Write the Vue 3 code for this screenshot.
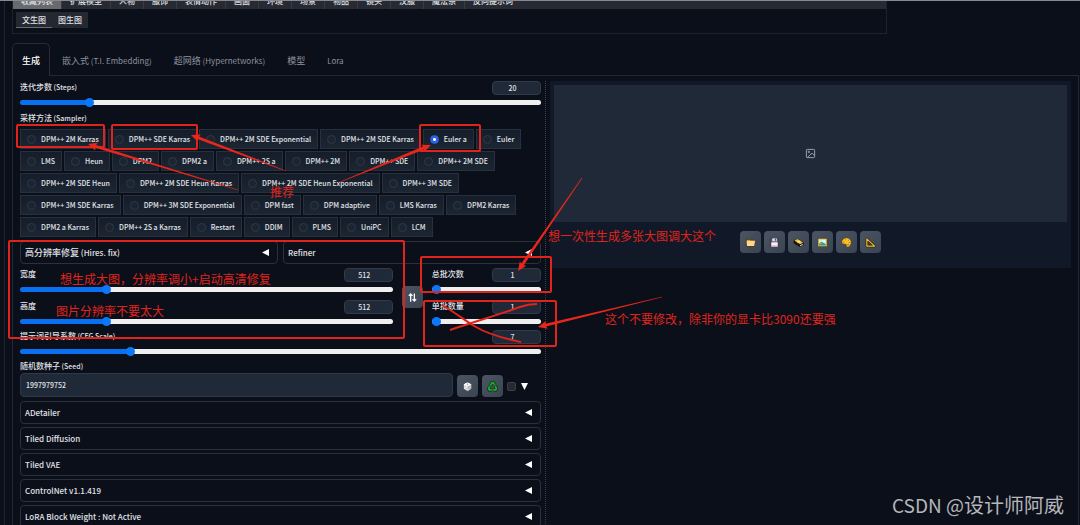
<script setup>
import { ref, reactive, h } from 'vue'

const categories = ['收藏列表', '扩展模型', '人物', '服饰', '表情动作', '画面', '环境', '场景', '物品', '镜头', '汉服', '魔法系', '反向提示词']
const modes = ['文生图', '图生图']
const tabs = ['生成', '嵌入式 (T.I. Embedding)', '超网络 (Hypernetworks)', '模型', 'Lora']

const samplerRows = [
  ['DPM++ 2M Karras', 'DPM++ SDE Karras', 'DPM++ 2M SDE Exponential', 'DPM++ 2M SDE Karras', 'Euler a', 'Euler'],
  ['LMS', 'Heun', 'DPM2', 'DPM2 a', 'DPM++ 2S a', 'DPM++ 2M', 'DPM++ SDE', 'DPM++ 2M SDE'],
  ['DPM++ 2M SDE Heun', 'DPM++ 2M SDE Heun Karras', 'DPM++ 2M SDE Heun Exponential', 'DPM++ 3M SDE'],
  ['DPM++ 3M SDE Karras', 'DPM++ 3M SDE Exponential', 'DPM fast', 'DPM adaptive', 'LMS Karras', 'DPM2 Karras'],
  ['DPM2 a Karras', 'DPM++ 2S a Karras', 'Restart', 'DDIM', 'PLMS', 'UniPC', 'LCM'],
]
const sampler = ref('Euler a')

const s = reactive({
  steps: { id: 'steps', label: '迭代步数 (Steps)', value: 20, min: 1, max: 150 },
  width: { id: 'width', label: '宽度', value: 512, min: 64, max: 2048 },
  height: { id: 'height', label: '高度', value: 512, min: 64, max: 2048 },
  count: { id: 'count', label: '总批次数', value: 1, min: 1, max: 100 },
  size: { id: 'size', label: '单批数量', value: 1, min: 1, max: 8 },
  cfg: { id: 'cfg', label: '提示词引导系数 (CFG Scale)', value: 7, min: 1, max: 30 },
})
const fill = (f) => ({ '--fill': ((f.value - f.min) / (f.max - f.min)) * 100 + '%' })
const groups = [[s.steps], [s.width, s.height], [s.count, s.size], [s.cfg]]

const seed = ref('1997979752')
const scripts = ['ADetailer', 'Tiled Diffusion', 'Tiled VAE', 'ControlNet v1.1.419', 'LoRA Block Weight : Not Active']
const tools = ['folder', 'save', 'archive', 'picture', 'palette', 'ruler']

// Latin runs are set one size below the Chinese characters beside them.
const Mixed = ({ text }) =>
  h('span', text.match(/[ -~]+|[^ -~]+/g).map((run) => (/^[ -~]/.test(run) ? h('span', { class: 'latin' }, run) : run)))
Mixed.props = ['text']

const boxes = [
  [17, 125, 87, 22], [112, 125, 85, 24], [420, 125, 60, 26],
  [9, 241, 395, 97], [421, 257, 130, 35], [424, 301, 132, 45],
]
const arrows = [
  [238, 190, 88, 144], [286, 171, 191, 135], [340, 182, 431, 145],
  [582, 178, 518, 271], [662, 297, 538, 327],
].map(([x1, y1, x2, y2]) => {
  const d = Math.hypot(x2 - x1, y2 - y1)
  const ux = (x2 - x1) / d
  const uy = (y2 - y1) / d
  const at = (back, side) => `${x2 - ux * back - uy * side},${y2 - uy * back + ux * side}`
  return [at(d, 0.3), at(8, 1.5), at(9, 4), at(0, 0), at(9, -4), at(8, -1.5), at(d, -0.3)].join(' ')
})
const notes = [
  [270, 197, '推荐'],
  [60, 284, '想生成大图，分辨率调小+启动高清修复'],
  [56, 316, '图片分辨率不要太大'],
  [548, 241, '想一次性生成多张大图调大这个'],
  [605, 324, '这个不要修改，除非你的显卡比3090还要强'],
]
</script>

<template>
  <div class="page">
    <div class="shell">
      <header class="prompt-box">
        <nav class="categories">
          <button v-for="(c, i) in categories" :key="c" :class="{ active: i === 0 }">{{ c }}</button>
        </nav>
        <div class="modes">
          <button v-for="(m, i) in modes" :key="m" :class="{ active: i === 0 }">{{ m }}</button>
        </div>
      </header>

      <nav class="tabs">
        <button v-for="(t, i) in tabs" :key="t" :class="{ active: i === 0 }"><Mixed :text="t" /></button>
      </nav>

      <main class="panel">
        <section class="settings">
          <div v-for="f in groups[0]" :key="f.id" class="field">
            <div class="field-head">
              <label :for="f.id"><Mixed :text="f.label" /></label>
              <input :id="f.id" v-model.number="f.value" class="number" type="number" />
            </div>
            <input v-model.number="f.value" type="range" :min="f.min" :max="f.max" :style="fill(f)" :aria-label="f.label" />
          </div>

          <fieldset class="samplers">
            <legend><Mixed text="采样方法 (Sampler)" /></legend>
            <div v-for="(row, i) in samplerRows" :key="i" class="sampler-row">
              <label v-for="name in row" :key="name">
                <input v-model="sampler" type="radio" name="sampler" :value="name" />{{ name }}
              </label>
            </div>
          </fieldset>

          <div class="pair">
            <button class="accordion"><Mixed text="高分辨率修复 (Hires. fix)" /><svg class="tri" viewBox="0 0 7 7"><path d="M0 3.500L7 0V7z" /></svg></button>
            <button class="accordion"><Mixed text="Refiner" /><svg class="tri" viewBox="0 0 7 7"><path d="M0 3.500L7 0V7z" /></svg></button>
          </div>

          <div class="dimensions">
            <div class="stack">
              <div v-for="f in groups[1]" :key="f.id" class="field">
                <div class="field-head">
                  <label :for="f.id">{{ f.label }}</label>
                  <input :id="f.id" v-model.number="f.value" class="number" type="number" />
                </div>
                <input v-model.number="f.value" type="range" :min="f.min" :max="f.max" :style="fill(f)" :aria-label="f.label" />
              </div>
            </div>
            <button class="tool" aria-label="swap">
              <svg viewBox="0 0 12 12" fill="none" stroke="#fff" stroke-width="1.400"><path d="M4 10.500V2M2 4.200L4 2 6 4.200M8 1.500V10M6 7.800L8 10 10 7.800" /></svg>
            </button>
            <div class="stack">
              <div v-for="f in groups[2]" :key="f.id" class="field">
                <div class="field-head">
                  <label :for="f.id">{{ f.label }}</label>
                  <input :id="f.id" v-model.number="f.value" class="number" type="number" />
                </div>
                <input v-model.number="f.value" type="range" :min="f.min" :max="f.max" :style="fill(f)" :aria-label="f.label" />
              </div>
            </div>
          </div>

          <div v-for="f in groups[3]" :key="f.id" class="field cfg">
            <div class="field-head">
              <label :for="f.id"><Mixed :text="f.label" /></label>
              <input :id="f.id" v-model.number="f.value" class="number" type="number" />
            </div>
            <input v-model.number="f.value" type="range" :min="f.min" :max="f.max" :style="fill(f)" :aria-label="f.label" />
          </div>

          <div class="seed">
            <label for="seed"><Mixed text="随机数种子 (Seed)" /></label>
            <div class="seed-row">
              <input id="seed" v-model="seed" type="text" />
              <button class="tool" aria-label="random">
                <svg viewBox="0 0 12 12"><path d="M6 1.500L10 3.500V8.500L6 10.800 2 8.500V3.500z" fill="#e8e8e8" /><path d="M6 5.600L10 3.500V8.500L6 10.800z" fill="#c4c4c6" /><path d="M6 1.500L10 3.500 6 5.600 2 3.500z" fill="#fff" /><g fill="#77777c"><circle cx="6" cy="3.500" r=".7" /><circle cx="3.300" cy="5.800" r=".5" /><circle cx="4.800" cy="8.300" r=".5" /><circle cx="7.400" cy="6.500" r=".5" /><circle cx="8.800" cy="8" r=".5" /></g></svg>
              </button>
              <button class="tool" aria-label="reuse">
                <svg viewBox="0 0 12 12" fill="none" stroke-linejoin="round"><g stroke="#06340a" stroke-width="3.400"><path d="M3.600 5L5.600 1.800H6.800L8.200 4" /><path d="M9 5.500L10.300 8.200 9.500 9.800H6.800" /><path d="M5 9.800H2.400L1.700 8.400 3 6" /></g><g stroke="#17b52a" stroke-width="1.900"><path d="M3.600 5L5.600 1.800H6.800L8.200 4" /><path d="M9 5.500L10.300 8.200 9.500 9.800H6.800" /><path d="M5 9.800H2.400L1.700 8.400 3 6" /></g></svg>
              </button>
              <label class="extra"><input type="checkbox" aria-label="extra" /><svg class="tri" viewBox="0 0 7 7"><path d="M0 0H7L3.500 7z" /></svg></label>
            </div>
          </div>

          <div class="scripts">
            <button v-for="t in scripts" :key="t" class="accordion"><Mixed :text="t" /><svg class="tri" viewBox="0 0 7 7"><path d="M0 3.500L7 0V7z" /></svg></button>
          </div>
        </section>

        <div class="divider"></div>

        <section class="output">
          <div class="gallery">
            <div class="preview">
              <svg viewBox="0 0 12 12" fill="none" stroke="#a3abb7" stroke-width="1"><rect x="1.500" y="1.500" width="9" height="9" rx="1" /><circle cx="4.200" cy="4.200" r=".8" /><path d="M2.500 10.500L7.500 5.500 10.500 8.500" /></svg>
            </div>
            <div class="toolbar">
              <button v-for="t in tools" :key="t" class="tool" :aria-label="t">
                <svg v-if="t === 'folder'" viewBox="0 0 12 12"><path d="M1.500 2.500H5L6 3.500H10V9.800H1.500z" fill="#c98b2c" stroke="#33270f" stroke-width=".7" /><path d="M1.800 4.200H11L10 9.700H2.200z" fill="#ffd88a" /></svg>
                <svg v-else-if="t === 'save'" viewBox="0 0 12 12"><path d="M1.500 1.500H9.500L10.500 2.500V10.500H1.500z" fill="#5c5964" stroke="#303039" stroke-width=".6" /><path d="M3.500 1.500H8.500V4.700H3.500z" fill="#d8dbe2" /><path d="M6.500 2H7.600V4H6.500z" fill="#4a4a55" /><path d="M2.500 5.800H9.500V10.500H2.500z" fill="#f6f2f8" /><path d="M2.500 9.200H9.500V10.300H2.500z" fill="#dd9ccc" /></svg>
                <svg v-else-if="t === 'archive'" viewBox="0 0 12 12"><path d="M.7 3.800L5 1.800 11.500 6V9L7.300 11 .7 6.900z" fill="#17150f" /><path d="M1.500 3.700L5 2.200 11 6.200 7.700 8z" fill="#f4bd35" /><path d="M4 5.400L7.500 3.800 8.700 4.500 5.500 6.300z" fill="#fff0a5" /><path d="M7.700 9L10.800 7.500V8.600L7.700 10.200z" fill="#d9d9d9" /></svg>
                <svg v-else-if="t === 'picture'" viewBox="0 0 12 12"><rect x="1" y="1.500" width="10" height="9" fill="#e1b64b" stroke="#453717" stroke-width=".5" /><rect x="2.300" y="2.800" width="7.400" height="6.400" fill="#c8f0f4" /><path d="M2.300 7.400L5 5.200 9.700 8V9.200H2.300z" fill="#39a268" /><circle cx="7.800" cy="4.500" r="1" fill="#fff" /><circle cx="4.200" cy="6.700" r="1" fill="#e2837a" /></svg>
                <svg v-else-if="t === 'palette'" viewBox="0 0 12 12"><path d="M6.300 1C9 1 11 3 11 5.800 11 8.700 9 11 6.900 11 5.600 11 6.600 8.400 5.200 7.700 4 7.200 1 8.500 1 5.500 1 3 3.200 1 6.300 1z" fill="#ffc21c" stroke="#5d420b" stroke-width=".4" /><circle cx="3.200" cy="5.500" r=".7" fill="#d84735" /><circle cx="5" cy="3" r=".6" fill="#4c9c37" /><circle cx="8" cy="3.300" r=".6" fill="#3f80c8" /><circle cx="9" cy="6" r=".6" fill="#8951a2" /><circle cx="7.700" cy="8.500" r=".7" fill="#3b3425" /></svg>
                <svg v-else viewBox="0 0 12 12" fill="none" stroke-linejoin="round"><path d="M2 2V10H10.500z" stroke="#2b220d" stroke-width="2.600" /><path d="M2 2V10H10.500z" stroke="#f2ba31" stroke-width="1.300" /><path d="M4 6.500V8.300H6z" stroke="#2b220d" stroke-width=".6" /></svg>
              </button>
            </div>
          </div>
        </section>
      </main>
    </div>

    <svg class="markup" width="1080" height="525" viewBox="0 0 1080 525">
      <g fill="none" stroke="#e0241c" stroke-width="2">
        <rect v-for="(b, i) in boxes" :key="i" :x="b[0]" :y="b[1]" :width="b[2]" :height="b[3]" rx="1" />
        <path d="M450 330C474 322 504 313 520 307Q528 304 537 304" />
        <path d="M442 305C456 313 464 320 476 327C491 336 508 339 521 342" />
      </g>
      <polygon v-for="(a, i) in arrows" :key="i" :points="a" fill="#e8261c" />
      <text v-for="n in notes" :key="n[2]" :x="n[0]" :y="n[1]">{{ n[2] }}</text>
    </svg>
    <div class="watermark"><Mixed text="CSDN @设计师阿威" /></div>
  </div>
</template>

<style>
body {
  background: #0b0f19;
}
</style>

<style scoped>
* {
  box-sizing: border-box;
}
.page {
  position: relative;
  height: 100vh;
  overflow: hidden;
  border-top: 1px solid #858991;
  background: #0b0f19;
  color: #e0e3e8;
  font: 500 8px/11px "Noto Sans CJK SC", sans-serif;
}
.page :deep(.latin) {
  font-size: 7px;
}
.tabs :deep(.latin),
.accordion :deep(.latin) {
  font-size: 8px;
}
.watermark :deep(.latin) {
  font-size: 19px;
}
.shell {
  margin: 0 1px 0 4px;
  padding-left: 7px;
  border-left: 1px solid #202531;
}
button,
input {
  margin: 0;
  padding: 0;
  border: 0;
  background: none;
  color: inherit;
  font: inherit;
}
.prompt-box {
  width: 82%;
  height: 33px;
  border: 1px solid #1d222d;
  border-top: 0;
}
.categories {
  display: flex;
  align-items: flex-end;
  height: 8px;
  background: #272a32;
}
.categories button {
  flex: none;
  height: 17px;
  padding: 0 8px;
  border-right: 1px solid #373b43;
  line-height: 16px;
}
.categories button:last-child {
  border-right: 0;
}
.categories button.active {
  background: #686a6d;
}
.modes {
  display: inline-flex;
  margin: 3px;
  background: #242831;
}
.modes button {
  height: 16px;
  padding: 0 6px;
  border-bottom: 1px solid transparent;
}
.modes .active {
  border-bottom-color: #686c74;
}
.tabs {
  display: flex;
  gap: 2px;
  margin-top: 9px;
  font-size: 9px;
}
.tabs button {
  position: relative;
  height: 33px;
  margin-bottom: -1px;
  padding: 0 9px;
  border: 1px solid transparent;
  border-bottom: 0;
  border-radius: 5px 5px 0 0;
  color: #8b929e;
  font-weight: 400;
}
.tabs .active {
  border-color: #262b37;
  background: #0b0f19;
  color: #fff;
  font-weight: 500;
}
.panel {
  display: grid;
  grid-template-columns: minmax(0, 1fr) 1px minmax(0, 1fr);
  gap: 4px;
  padding: 5px 7px;
  border: 1px solid #232834;
}
.divider {
  border-left: 1px dotted #3b414d;
}
.field {
  display: flex;
  flex-direction: column;
  gap: 2px;
}
.field-head {
  display: flex;
  justify-content: space-between;
  height: 14px;
}
.number {
  width: 49px;
  height: 14px;
  padding-right: 8px;
  border: 1px solid #303a48;
  border-radius: 4px;
  background: #1f2937;
  font-size: 7px;
  text-align: center;
  appearance: textfield;
}
.number::-webkit-inner-spin-button {
  display: none;
}
input[type='range'] {
  width: 100%;
  height: 10px;
  appearance: none;
}
input[type='range']::-webkit-slider-runnable-track {
  height: 5px;
  border-radius: 3px;
  background: linear-gradient(90deg, #0a70f2 var(--fill), #efefef var(--fill));
}
input[type='range']::-webkit-slider-thumb {
  width: 9px;
  height: 9px;
  margin-top: -2px;
  border-radius: 50%;
  background: #0a78fa;
  appearance: none;
}
.samplers {
  display: flex;
  flex-direction: column;
  gap: 2px;
  margin: 5px 0 0;
  padding: 0;
  border: 0;
}
.samplers legend {
  margin-bottom: 5px;
  padding: 0;
}
.sampler-row {
  display: flex;
  gap: 2px;
  white-space: nowrap;
  font-size: 7px;
}
.sampler-row label {
  display: flex;
  align-items: center;
  gap: 5px;
  height: 20px;
  padding: 0 6px;
  border: 1px solid #28303d;
  background: linear-gradient(#151d2a, #1c2532);
}
.sampler-row input {
  flex: none;
  width: 9px;
  height: 9px;
  border: 1px solid #303a47;
  border-radius: 50%;
  background: #1b2430;
  appearance: none;
}
.sampler-row input:checked {
  border-color: #2563eb;
  background: radial-gradient(circle, #fff 1px, #2563eb 2px);
}
.pair {
  display: grid;
  grid-template-columns: 1fr 1fr;
  gap: 5px;
  margin-top: 4px;
}
.accordion {
  display: flex;
  align-items: center;
  justify-content: space-between;
  height: 23px;
  padding: 0 8px 0 4px;
  border: 1px solid #2b303b;
  border-radius: 4px;
  font-size: 9px;
}
.tri {
  width: 7px;
  height: 7px;
  fill: #fff;
}
.dimensions {
  display: grid;
  grid-template-columns: minmax(0, 372fr) 21px minmax(0, 109fr);
  align-items: center;
  column-gap: 9px;
  margin-top: 4px;
}
.stack {
  display: grid;
  gap: 6px;
}
.tool {
  display: flex;
  flex: none;
  align-items: center;
  justify-content: center;
  width: 21px;
  height: 22px;
  border-radius: 4px;
  background: linear-gradient(135deg, #4b5563, #3b4451);
}
.tool svg {
  width: 11px;
  height: 11px;
}
.cfg {
  margin-top: 4px;
}
.seed {
  margin-top: 4px;
}
.seed > label {
  display: block;
}
.seed-row {
  display: flex;
  align-items: flex-end;
  gap: 4px;
  margin-top: 1px;
}
.seed-row input[type='text'] {
  flex: 1;
  min-width: 0;
  height: 24px;
  padding: 0 5px;
  border: 1px solid #2f3947;
  border-radius: 4px;
  background: #1f2937;
  font-size: 7px;
}
.extra {
  display: flex;
  align-items: center;
  gap: 5px;
  width: 34px;
  height: 22px;
}
.extra input {
  width: 9px;
  height: 9px;
  border: 1px solid #3a3f49;
  border-radius: 2px;
  background: #252932;
  appearance: none;
}
.scripts {
  display: grid;
  gap: 3px;
  margin-top: 4px;
}
.gallery {
  padding: 4px;
  background: #111827;
}
.preview {
  display: flex;
  align-items: center;
  justify-content: center;
  height: 137px;
  background: #1f2937;
}
.preview svg {
  width: 11px;
  height: 11px;
}
.toolbar {
  display: flex;
  justify-content: center;
  gap: 3px;
  padding: 9px 0 11px;
}
.markup {
  position: absolute;
  top: -1px;
  left: 0;
  pointer-events: none;
}
.markup text {
  fill: #e0241c;
  font-size: 12px;
  font-weight: 400;
}
.watermark {
  position: absolute;
  right: 16px;
  bottom: 8px;
  color: #b5b6b9;
  font-size: 20px;
  font-weight: 400;
  line-height: 24px;
}
</style>
